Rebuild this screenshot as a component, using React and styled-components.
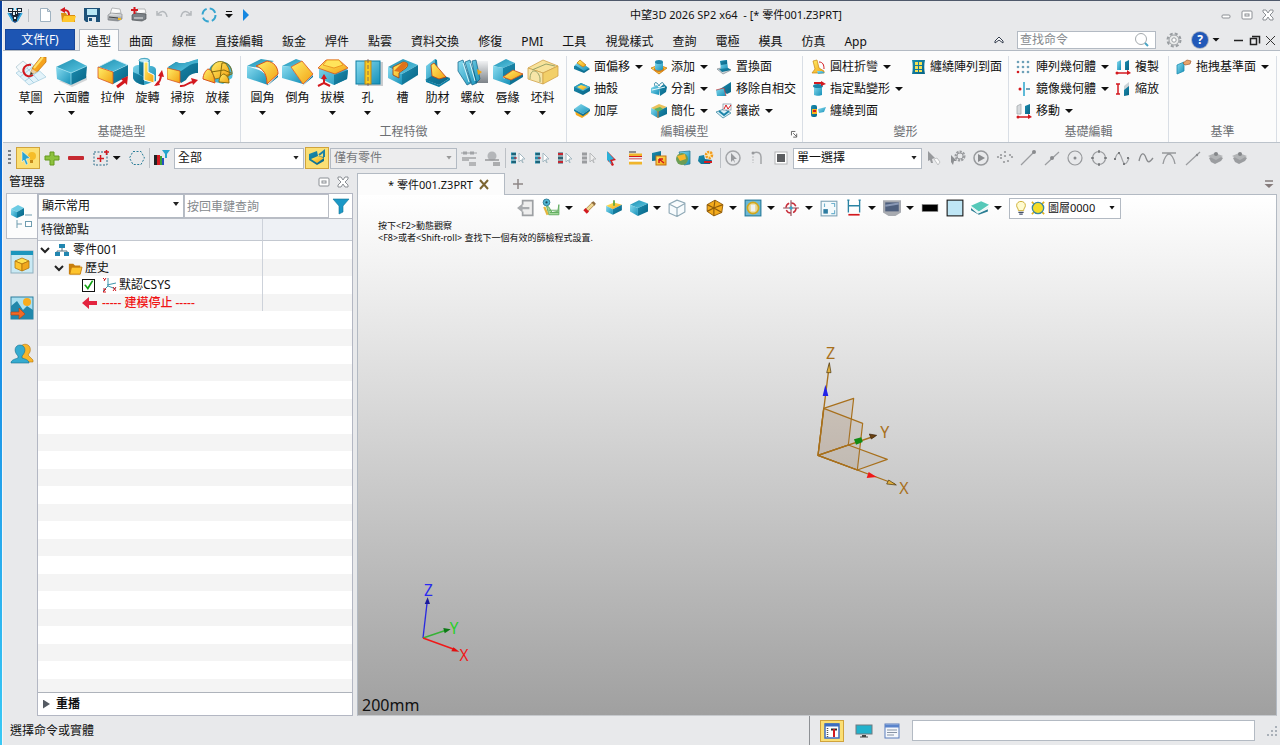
import React from "react";
import styled, { createGlobalStyle, css } from "styled-components";

const GlobalStyle = createGlobalStyle`
  * {
    box-sizing: border-box;
  }

  body {
    margin: 0;
    overflow: hidden;
  }

  body, button, input, select, table {
    font-family: "Noto Sans", "Noto Sans CJK TC", sans-serif;
    font-size: 12px;
    line-height: 16px;
    color: #111;
  }

  button {
    padding: 0;
    border: 0;
    background: none;
    white-space: nowrap;
  }

  svg {
    display: block;
    flex: none;
  }
`;

const T1 = "url(#tealTop)";
const T2 = "url(#tealLeft)";
const T3 = "url(#tealRight)";
const Y = "url(#yellow)";
const G = "url(#grey)";
const RED = "#d3191f";

const HiddenSvg = styled.svg`
  position: absolute;
`;

const Defs = () => (
  <HiddenSvg width="0" height="0" aria-hidden="true">
    <defs>
      <linearGradient id="tealTop" x1="0" y1="0" x2="1" y2="1">
        <stop offset="0" stopColor="#1f8fb0" />
        <stop offset="1" stopColor="#5cc8e4" />
      </linearGradient>
      <linearGradient id="tealLeft" x1="0" y1="0" x2="1" y2="1">
        <stop offset="0" stopColor="#8adcf0" />
        <stop offset="1" stopColor="#1590b8" />
      </linearGradient>
      <linearGradient id="tealRight" x1="0" y1="0" x2="1" y2="1">
        <stop offset="0" stopColor="#1c8db0" />
        <stop offset="1" stopColor="#086485" />
      </linearGradient>
      <linearGradient id="yellow" x1="0" y1="0" x2="1" y2="1">
        <stop offset="0" stopColor="#fff06a" />
        <stop offset="1" stopColor="#f2a012" />
      </linearGradient>
      <linearGradient id="grey" x1="0" y1="0" x2="0" y2="1">
        <stop offset="0" stopColor="#f1f2f3" />
        <stop offset="1" stopColor="#7c8288" />
      </linearGradient>
    </defs>
  </HiddenSvg>
);

const Face = ({ p, f, s }) => (
  <polygon points={p} fill={f} stroke={s} strokeWidth={s ? 0.8 : 0} strokeLinejoin="round" />
);

const MiniBox = ({ top = T1, left = T2, right = T3 }) => (
  <>
    <Face p="0,5 8,1 16,4 7,8" f={top} />
    <Face p="0,5 7,8 7,15 0,11" f={left} />
    <Face p="7,8 16,4 16,11 7,15" f={right} />
  </>
);

/* ribbon drawings, 32 x 32 */
const big = {
  sketch: (
    <>
      <Face p="1,16 16,6 31,20 14,28" f="#e3f3fa" s="#a9cfdf" />
      <path d="M5 20l14-11M10 24l14-10M6 13l13 13M11 10l13 14" stroke="#a9d2e4" fill="none" />
      <Face p="1,10 8,4 14,9 6,16" f="#f3f8fa" s="#b4cad4" />
      <path d="M16 8c-6-1-9 4-7 8c2 4 6 4 9 2" stroke={RED} strokeWidth="2" fill="none" />
      <Face p="15,18 18,10 26,0 31,0 31,5 23,14" f="#f6a31c" s="#c57312" />
      <path d="M19 11l9-11" stroke="#ffe16a" strokeWidth="2" />
      <Face p="15,18 17,12 22,15" f="#e8cfa4" />
      <Face p="15,18 16,15 18,17" f="#333" />
    </>
  ),
  block: (
    <>
      <Face p="3,24 16,30 31,23 31,19" f="#d3d6d8" />
      <Face p="0,10 17,2 31,9 15,16" f={T1} />
      <Face p="0,10 15,16 15,28 1,22" f={T2} />
      <Face p="15,16 31,9 30,21 15,28" f={T3} />
      <path d="M0 10l15 6l16-7M15 16v12" stroke="#9fe2f2" fill="none" strokeWidth=".7" />
    </>
  ),
  extrude: (
    <>
      <Face p="1,10 17,2 31,8 16,15" f={T1} s="#d9f3fa" />
      <Face p="16,15 31,8 31,19 16,27" f={T3} />
      <Face p="1,10 16,15 16,27 1,21" f={Y} s="#d9531e" />
      <path d="M20 30l8-6" stroke={RED} strokeWidth="3" />
      <Face p="31,19 30,28 24,22" f={RED} />
    </>
  ),
  revolve: (
    <>
      <path d="M1 12c0-3 3-4 6-4V3c2-3 9-3 11 0v6c4 0 6 2 6 4v11l-12 4C6 27 1 24 1 20z" fill={T2} />
      <ellipse cx="12" cy="3.500" rx="5" ry="2" fill="#c4edf7" stroke="#2a8cab" strokeWidth=".7" />
      <path d="M7 8v9l5 3V6c-2 0-4-1-5-2z" fill={T3} />
      <path d="M1 15l11 5v8C6 27 1 24 1 20z" fill={T3} />
      <path d="M12 5h4v10l6 3v8l-10-3z" fill={Y} stroke="#fff" />
      <path d="M24 28c3-2 5-5 5-11" stroke={RED} strokeWidth="2" fill="none" />
      <Face p="26,19 30,13 32,20" f={RED} />
      <Face p="22,29 26,24 28,28" f={RED} />
    </>
  ),
  sweep: (
    <>
      <path d="M1 10l8-5c7 3 11 0 22-2v13c-6 0-9 2-12 7l-5 3z" fill={T3} />
      <path d="M1 11l8-6c7 3 11 0 22-3v4c-8 0-10 4-17 8z" fill={T1} />
      <Face p="0,11 13,14 13,26 0,22" f={Y} s="#d9531e" />
      <path d="M13 29c6 1 8-4 13-4" stroke={RED} strokeWidth="2" fill="none" />
      <Face p="24,21 31,23 26,28" f={RED} />
    </>
  ),
  loft: (
    <>
      <path d="M1 22L9 9c6-7 16-6 20 1c2 4 2 8 1 11l-9 6z" fill={T1} />
      <path d="M1 22c0-5 3-9 5-10c4 1 6 6 7 14z" fill={Y} stroke="#d9531e" />
      <path d="M9 12c3-8 10-9 14-6c4 4 5 9 4 13l-14 3z" fill={Y} stroke="#876b0b" strokeWidth=".8" />
      <path d="M20 6c6-1 10 4 10 11l-8 2M9 15l13-2l7 3M20 6l-2 15" fill="none" stroke="#876b0b" />
      <path d="M17 25c0-5 3-8 5-8c4 2 5 5 5 9z" fill={Y} stroke="#876b0b" />
    </>
  ),
  fillet: (
    <>
      <Face p="0,9 14,2 27,4 13,11" f={T1} />
      <path d="M0 9l12 4c7 3 9 8 9 15L0 21z" fill={T2} />
      <path d="M9 9l11-5c7 1 11 6 11 13l-11 10c0-9-3-15-11-18z" fill={Y} stroke="#d9531e" />
      <Face p="20,29 31,18 31,20" f={T3} />
    </>
  ),
  chamfer: (
    <>
      <Face p="0,9 14,2 20,4 9,10" f={T1} />
      <Face p="0,9 9,10 21,27 0,21" f={T2} />
      <Face p="9,10 20,4 31,17 21,27" f={Y} s="#d9531e" />
      <Face p="20,29 31,18 31,20" f={T3} />
    </>
  ),
  draft: (
    <>
      <Face p="2,11 18,6 31,13 30,22 17,28 2,21" f={T2} />
      <Face p="17,18 31,13 30,22 17,28" f={T3} />
      <Face p="1,11 9,3 22,3 31,11 18,17" f={Y} s="#d9531e" />
      <Face p="6,8 10,3 22,3 26,8 17,11" f="#ffe45b" s="#e78a19" />
      <path d="M7 20v6l-6 3M7 26l6 3" stroke={RED} strokeWidth="2" fill="none" />
      <Face p="4,22 7,17 10,22" f={RED} />
    </>
  ),
  hole: (
    <>
      <rect x="6" y="5" width="25" height="24" fill="#c9cccf" />
      <rect x="4" y="4" width="24" height="23" fill={T2} stroke="#0b7da3" />
      <rect x="13" y="4" width="6" height="23" fill="#f8cc22" stroke="#c78a10" />
      <path d="M16 2v27" stroke="#755" strokeDasharray="4 2" strokeWidth=".8" />
    </>
  ),
  slot: (
    <>
      <Face p="1,10 16,2 31,8 15,17" f={T1} />
      <Face p="1,10 15,17 15,28 1,21" f={T2} />
      <Face p="15,17 31,8 31,18 15,28" f={T3} />
      <path d="M6 18v-8l10-5c5 0 6 3 3 6l-7 5v5z" fill={Y} stroke="#a33b0b" strokeWidth=".8" />
      <path d="M7 14l9-9c5 0 5 3 2 6l-5 4z" fill="#e0721b" />
    </>
  ),
  rib: (
    <>
      <Face p="4,9 13,2 14,18 4,23" f={T2} />
      <Face p="13,2 15,3 16,17 28,21 17,28 3,23 13,17" f={T3} />
      <Face p="9,8 12,6 24,20 17,22 10,19" f={Y} s="#c23d12" />
      <Face p="4,23 17,28 28,21 28,23 17,30 4,25" f="#0b7da3" />
    </>
  ),
  thread: (
    <>
      <rect x="17" y="4" width="14" height="22" fill={G} />
      <path d="M1 5l5-2l8 23l-4 2L1 14zM8 5l5-2l7 23l-5 2zM15 4l4-1l4 19l-4 4z" fill={T2} stroke="#0d6084" strokeWidth=".7" />
      <path d="M6 6l6 19M13 6l5 18" stroke="#d9f5fb" />
      <Face p="20,12 25,15 21,18" f="#f0a414" />
    </>
  ),
  lip: (
    <>
      <Face p="1,9 14,2 23,6 11,11" f={T1} />
      <Face p="11,11 23,6 23,14 31,17 31,20 18,28 11,19" f={T3} />
      <Face p="1,9 11,11 11,21 18,23 18,28 1,22" f={T2} />
      <Face p="11,20 21,13 31,17 19,23" f={Y} s="#d9531e" />
    </>
  ),
  stock: (
    <>
      <Face p="1,11 16,3 31,9 16,16" f="#f7e29a" s="#d0a24a" />
      <Face p="1,11 16,16 16,27 1,22" f="#f6e5a8" s="#d0a24a" />
      <Face p="16,16 31,9 31,19 16,27" f="#f2cf68" s="#d0a24a" />
      <path d="M3 22c0-11 8-10 10-1v4M5 13l14-6l9 2" fill="none" stroke="#98a36a" />
    </>
  ),
};

/* toolbar drawings, 16 x 16 */
const small = {
  logo: (
    <>
      <path d="M1 6h14l-4 8l-3 2l-3-2z" fill="#1b4f86" />
      <path d="M1 6l5 8M15 6l-5 8" stroke="#37aee0" strokeWidth="1.500" />
      <path d="M1 1h5v4H1zM10 1h5v4h-5zM5 4h6v5H5zM6 9h4v5H6z" fill="#1b2430" />
      <path d="M2 2h3v2H2zM11 2h3v2h-3zM6 5h2v3H6zM9 5h1v2H9zM7 10h2v2H7z" fill="#e6f3fa" />
      <path d="M6 1h1v2H6zM9 1h1v2H9z" fill="#37aee0" />
    </>
  ),
  newFile: <path d="M3.500 1.500h7l3 3v10h-10zM10.500 1.500v3h3" fill="#fff" stroke="#9fb2c1" />,
  open: (
    <>
      <path d="M1 6h5l1 2h8v7H2z" fill="#d98e12" />
      <path d="M4 9h12l-2 6H2z" fill="#ffc72c" />
      <path d="M9 8c0-5-3-5-5-5" stroke={RED} strokeWidth="2" fill="none" />
      <Face p="0,3 5,0 5,6" f={RED} />
    </>
  ),
  save: (
    <>
      <path d="M0 1h16v14H2l-2-2z" fill="#1e5279" />
      <rect x="3" y="2" width="10" height="6" fill="#b9e7f4" />
      <rect x="4" y="10" width="8" height="5" fill="#dce7ee" />
      <rect x="5" y="11" width="3" height="3" fill="#1e5279" />
    </>
  ),
  print: (
    <>
      <Face p="5,1 13,2 14,6 3,7" f="#fafafa" s="#a5a7a9" />
      <path d="M1 8l3-2l11 1v5l-4 2l-10-1z" fill={G} stroke="#85888b" strokeWidth=".7" />
      <path d="M2 10l9 1" stroke="#444" />
      <path d="M11 12h3" stroke="#f3b81a" strokeWidth="2" />
    </>
  ),
  printPlus: (
    <>
      <Face p="6,2 14,2 15,6 5,7" f="#fafafa" s="#a5a7a9" />
      <path d="M1 8l3-2l11 1v5l-4 2l-10-1z" fill="#7b8187" stroke="#4d5155" strokeWidth=".7" />
      <path d="M3 11h9" stroke="#eee" />
      <path d="M0 3h7M3.500 0v7" stroke={RED} strokeWidth="2" />
    </>
  ),
  undo: <path d="M4 7c4-4 8-3 9 3M3 4v4h5" stroke="#b4b8bc" strokeWidth="1.500" fill="none" />,
  redo: <path d="M12 7C8 3 4 4 3 10M13 4v4H8" stroke="#b4b8bc" strokeWidth="1.500" fill="none" />,
  refresh: <circle cx="8" cy="8" r="6.500" fill="none" stroke="#36a5cf" strokeWidth="2" strokeDasharray="7 3.200" />,
  play: <path d="M5 2l6 6l-6 6z" fill="#1687e0" />,
  offset: (
    <>
      <Face p="0,7 6,4 16,10 10,14 0,10" f={T3} />
      <Face p="1,6 5,2 15,9 10,12" f={T2} />
      <Face p="3,4 6,1 12,6 9,8" f={Y} s="#c98410" />
    </>
  ),
  shell: (
    <>
      <Face p="0,6 7,2 16,6 16,10 9,14 0,10" f={T3} />
      <Face p="0,6 7,2 16,6 9,10" f={T1} />
      <Face p="3,6 7,4 13,6 9,9" f={Y} />
    </>
  ),
  thicken: (
    <>
      <Face p="1,8 8,12 16,7 14,11 8,15 2,12" f="#f2a81d" />
      <Face p="0,6 7,1 16,6 9,11" f={T2} />
      <Face p="0,6 9,11 16,6 16,8 9,13 0,8" f={T3} />
    </>
  ),
  add: (
    <>
      <Face p="0,9 8,6 16,9 8,15" f={Y} s="#c9770d" />
      <ellipse cx="8" cy="10" rx="5" ry="3" fill="#d77a12" />
      <path d="M4 3v7c2 2 6 2 8 0V3z" fill={T2} />
      <ellipse cx="8" cy="3" rx="4" ry="2" fill="#2388ae" />
    </>
  ),
  divide: (
    <>
      <Face p="0,7 6,4 8,7 8,14 0,12" f={T2} />
      <Face p="8,7 13,3 16,6 15,11 9,15" f={T3} />
      <path d="M4 5c-2-4 2-5 4 0c2-5 6-4 4 0" stroke="#3c8ca8" fill="none" />
      <path d="M1 9l13-3" stroke="#e6f8fc" />
    </>
  ),
  simplify: (
    <>
      <MiniBox top="#e9c25b" />
      <Face p="3,6 9,4 12,6 7,9" f="#59b368" />
      <path d="M7 8v7" stroke="#e4761b" />
    </>
  ),
  replace: (
    <>
      <Face p="1,10 9,8 15,11 7,15" f="#cfd5d9" s="#8a969c" />
      <Face p="4,2 11,1 12,10 5,11" f={T2} />
      <Face p="4,2 11,1 11,5 5,6" f={T3} />
      <Face p="3,10 12,9 15,11 6,13" f={T3} />
    </>
  ),
  selfCross: (
    <>
      <Face p="4,8 15,1 15,11 11,13" f={T3} />
      <Face p="0,9 8,7 10,15 1,15" f={T2} />
      <path d="M0 9l8-2l2 8" stroke="#c93131" fill="none" strokeWidth=".7" />
    </>
  ),
  inlay: (
    <>
      <Face p="0,9 8,6 15,10 7,15" f="#d8eff7" s="#438ba5" />
      <path d="M3 8l5 4l5-4" stroke="#1b83a8" strokeWidth="2" fill="none" />
      <rect x="7" y="1" width="8" height="6" fill="#fff" stroke="#789" strokeWidth=".7" />
      <path d="M8 6l2-4l2 4l3-4" stroke={RED} fill="none" />
    </>
  ),
  bend: (
    <>
      <path d="M3 2l4-1l2 8l5 3v2H2l3-4z" fill={Y} stroke="#c98410" strokeWidth=".7" />
      <path d="M9 3c4 0 5 3 5 7" stroke={RED} fill="none" />
      <Face p="7,12 12,12 15,14 8,15" f={T2} />
    </>
  ),
  pointDeform: (
    <>
      <path d="M4 4v10c2 1 6 1 8 0V4z" fill={T2} />
      <ellipse cx="8" cy="5" rx="5" ry="2" fill="#1c83a8" />
      <path d="M4 2h9" stroke={RED} strokeWidth="2" />
      <Face p="11,0 16,3 11,5" f={RED} />
    </>
  ),
  wrapFace: (
    <>
      <rect x="1" y="2" width="6" height="12" rx="2" fill={T3} />
      <rect x="2" y="6" width="5" height="5" fill="#f3b41c" />
      <path d="M3 8h3" stroke={RED} strokeWidth="2" />
      <Face p="8,6 16,4 14,9 9,10" f={T2} />
    </>
  ),
  wrapArray: (
    <>
      <path d="M2 1h13c-1 4-1 10 0 14H2c1-4 1-10 0-14z" fill={T3} />
      <path d="M5 3h3v3H5zM9 3h3v3H9zM5 7h3v3H5zM9 7h3v3H9zM5 11h3v2H5zM9 11h3v2H9z" fill="#f5e154" />
    </>
  ),
  pattern: (
    <>
      {[2, 7, 12].map((y) => [2, 7, 12].map((x) => (
        <circle key={`${x}-${y}`} cx={x} cy={y + 1} r="1.300" fill={x === 2 && y === 12 ? RED : "#6ea1b8"} />
      )))}
    </>
  ),
  mirror: (
    <>
      <path d="M8 1v14" stroke="#2aa5cd" strokeWidth="1.500" />
      <circle cx="4" cy="8" r="1.500" fill={RED} />
      <path d="M10 8h4" stroke="#6ea1b8" strokeWidth="2" />
    </>
  ),
  move: (
    <>
      <Face p="1,3 5,1 5,11 1,11" f="#d7dadd" s="#a6abaf" />
      <Face p="9,3 14,1 14,11 9,11" f={T3} />
      <path d="M1 14h13" stroke={RED} strokeWidth="1.500" />
      <circle cx="2" cy="14" r="1.500" fill={RED} />
      <Face p="12,11 16,14 12,16" f={RED} />
    </>
  ),
  copy: (
    <>
      <Face p="2,3 6,1 6,11 2,11" f={T2} />
      <Face p="10,3 14,1 14,11 10,11" f={T3} />
      <path d="M2 14h11" stroke={RED} strokeWidth="1.500" />
      <circle cx="2" cy="14" r="1.500" fill={RED} />
      <Face p="12,11 16,14 12,16" f={RED} />
    </>
  ),
  scale: (
    <>
      <path d="M3 3v10M1 3h4M1 13h4" stroke={RED} strokeWidth="1.500" />
      <Face p="9,5 14,1 14,14 9,15" f="#ccd3d6" />
      <Face p="9,9 14,5 14,14 9,15" f={T3} />
    </>
  ),
  datum: (
    <>
      <Face p="1,6 8,3 8,12 1,15" f={T2} s="#1a8eb2" />
      <path d="M7 4l4-3l4 1l-1 3l-5 1z" fill="#e8a46c" stroke="#a35d32" strokeWidth=".7" />
    </>
  ),
  pick: (
    <>
      <circle cx="12" cy="6" r="4" fill="#f6bd2a" />
      <path d="M10 10h3v3h-3z" fill="#c58a1a" />
      <path d="M2 1l8 7l-4 1l2 5l-2 1l-2-5l-2 2z" fill="#2aa4cf" stroke="#fff" strokeWidth=".5" />
    </>
  ),
  plus: <path d="M6 2h4v4h5v4h-5v5H6v-5H1V6h5z" fill="#8dc23e" stroke="#649a1d" />,
  minus: <rect x="0" y="6" width="16" height="4" rx="1" fill="#c62a31" />,
  marquee: (
    <>
      <rect x="1" y="2" width="13" height="13" fill="none" stroke="#2a6d88" strokeDasharray="2 1.500" />
      <path d="M4 8.500h7M7.500 5v7M11 2h5M13.500 0v5" stroke={RED} strokeWidth="1.500" />
    </>
  ),
  lasso: <path d="M4 1.500h8l3.500 6.500l-3.500 6.500h-8l-3.500-6.500z" fill="none" stroke="#2a7d98" strokeDasharray="2 1.500" />,
  colorFilter: (
    <>
      <path d="M0 5h3v10H0z" fill="#222" />
      <path d="M3 5h3v10H3z" fill="#d3191f" />
      <path d="M6 6h2v9H6z" fill="#38a038" />
      <path d="M8 8h2v7H8z" fill="#274ec0" />
      <path d="M8 0h8l-3 4v4h-2V4z" fill="#23a5cc" />
    </>
  ),
  partPick: (
    <>
      <Face p="0,4 8,1 9,6 15,7 15,11 8,15 0,10" f={T3} />
      <Face p="2,9 9,6 15,8 8,13" f={Y} />
      <path d="M10 5l5-4v6" stroke="#1b82a6" strokeWidth="2" fill="none" />
    </>
  ),
  link: (
    <>
      <path d="M0 3h16" stroke="#a2a4a7" />
      <path d="M2 3h4M9 3h4" stroke="#a2a4a7" strokeWidth="3" />
      <path d="M1 8h14M1 10h7M8 13h7M8 15h7" stroke="#a2a4a7" strokeWidth="1.500" />
    </>
  ),
  globeList: (
    <>
      <circle cx="7" cy="6" r="4.500" fill="#b4b6b9" />
      <path d="M0 10h14M8 13h7M8 15h7" stroke="#96989b" strokeWidth="1.500" />
    </>
  ),
  listTeal: (
    <>
      <path d="M1 4h5M1 8h5M1 12h5" stroke="#238aa8" strokeWidth="3" />
      <path d="M2 4h4M2 12h4" stroke="#1c3b46" />
      <path d="M4 8h3" stroke={RED} />
      <path d="M9 3l6 6h-3l1 4l-2-3l-2 2z" fill="#fff" stroke="#a5b9c2" />
    </>
  ),
  listRed: (
    <>
      <path d="M1 4h5M1 8h5M1 12h5" stroke="#2f6272" strokeWidth="3" />
      <path d="M1 4h5M1 12h5" stroke="#c32732" strokeWidth="2" />
      <path d="M9 3l6 6h-3l1 4l-2-3l-2 2z" fill="#fff" stroke="#a5b9c2" />
    </>
  ),
  listGrey: (
    <>
      <path d="M1 4h5M1 8h5M1 12h5" stroke="#9a9c9f" strokeWidth="3" />
      <path d="M9 3l6 6h-3l1 4l-2-3l-2 2z" fill="#eee" stroke="#b7b9bb" />
    </>
  ),
  cursor: (
    <>
      <path d="M4 2l8 8l-4 1l2 4l-2 1l-3-5l-1 1z" fill={RED} />
      <path d="M3 1l7 8l-4 1l2 4l-2-1l-2-3l-1 1z" fill="#2ab1d9" />
    </>
  ),
  layers: (
    <>
      <path d="M1 2h7" stroke="#333" />
      <path d="M1 5h13M1 13h13" stroke="#f0b52b" strokeWidth="3" />
      <path d="M1 6.500h13M1 9h13" stroke={RED} />
      <path d="M1 10.500h14" stroke="#fff" strokeWidth="2" />
    </>
  ),
  copyBox: (
    <>
      <path d="M1 3l9-2v9l-9 1z" fill={T3} />
      <rect x="5" y="6" width="10" height="9" fill={Y} stroke="#c57310" />
      <path d="M8 9l5 4M8 9h4M8 9v4" stroke={RED} strokeWidth="1.500" />
    </>
  ),
  ball: (
    <>
      <Face p="4,2 15,1 15,14 9,15" f={T2} s="#2b7e9b" />
      <circle cx="7" cy="9" r="6" fill="#6b9d55" />
      <path d="M2 6l8-2l1 5l-6 2z" fill="#f7b62b" />
    </>
  ),
  gearBox: (
    <>
      <Face p="1,6 6,5 7,9 14,10 12,14 3,14 0,11" f={T3} />
      <circle cx="11" cy="5" r="3" fill="#ffe9a8" stroke="#f29a1a" strokeWidth="2.500" strokeDasharray="2 1" />
      <path d="M6 12h8" stroke={RED} strokeWidth="2" />
    </>
  ),
  circleCursor: (
    <>
      <circle cx="8" cy="8" r="7" fill="none" stroke="#a3a5a8" strokeWidth="1.500" />
      <path d="M6 3l6 6H9l1 4l-2-3l-2 2z" fill="#97999c" />
    </>
  ),
  loop: (
    <>
      <path d="M4 3c5-2 8 0 8 4v7" stroke="#a3a5a8" strokeWidth="1.500" fill="none" />
      <path d="M4 6v7" stroke="#b9bbbd" strokeDasharray="2 1" />
      <circle cx="4" cy="3" r="1.500" fill="#97999c" />
    </>
  ),
  square: (
    <>
      <rect x="2" y="2" width="12" height="12" fill="#fff" stroke="#b2b4b6" />
      <rect x="4" y="4" width="8" height="8" fill="#5b5d60" />
    </>
  ),
  cursorGrey: (
    <>
      <path d="M2 1l7 7l-3 1l1 4l-2 0l-1-3l-2 1z" fill="#97999c" />
      <path d="M8 9l3-1l3 4l-2 3z" fill="#fafafa" stroke="#c1c3c5" />
    </>
  ),
  gearGrey: (
    <>
      <circle cx="10" cy="6" r="4" fill="none" stroke="#9b9da0" strokeWidth="3" strokeDasharray="2 1" />
      <circle cx="10" cy="6" r="3" fill="#e8e9eb" stroke="#9b9da0" />
      <path d="M1 5l6 6H4l-1 4l-2-3z" fill="#8d8f92" />
    </>
  ),
  circlePlay: (
    <>
      <circle cx="8" cy="8" r="7" fill="none" stroke="#97999c" strokeWidth="1.500" />
      <path d="M5 4l7 4l-7 4z" fill="#898b8e" />
    </>
  ),
  dots: (
    <>
      {[[1, 7], [4, 5], [4, 8], [8, 6], [8, 2], [13, 5], [15, 7], [7, 12], [11, 11]].map(([x, y]) => (
        <circle key={`${x}-${y}`} cx={x} cy={y} r="1.100" fill="#97999c" />
      ))}
    </>
  ),
  lineEnd: (
    <>
      <path d="M1 15L14 2" stroke="#9b9da0" strokeWidth="1.200" />
      <circle cx="14" cy="2" r="2" fill="#898b8e" />
    </>
  ),
  lineMid: (
    <>
      <path d="M1 15L15 2" stroke="#9b9da0" strokeWidth="1.200" />
      <circle cx="8" cy="8" r="2" fill="#898b8e" />
    </>
  ),
  circleDot: (
    <>
      <circle cx="8" cy="8" r="7" fill="none" stroke="#97999c" strokeWidth="1.200" />
      <circle cx="8" cy="8" r="1.500" fill="#898b8e" />
    </>
  ),
  circleQuad: (
    <>
      <circle cx="8" cy="8" r="6.500" fill="none" stroke="#97999c" strokeWidth="1.200" />
      <path d="M7 1.500h2M7 14.500h2M1.500 7v2M14.500 7v2" stroke="#77797c" strokeWidth="2.500" />
    </>
  ),
  spline: (
    <>
      <path d="M1 9c3-9 5-6 7 0s4 7 7-1" stroke="#a3a5a8" strokeWidth="1.200" fill="none" />
      <path d="M1 8v2M5 2v2M10 13v2M14 7v2" stroke="#77797c" strokeWidth="2" />
    </>
  ),
  wave: <path d="M1 11c2-9 5-9 7-3s4 4 7 0" stroke="#898b8e" strokeWidth="1.300" fill="none" />,
  tangent: <path d="M1 3h14M2 14c1-6 4-10 6-10s5 4 6 10" stroke="#97999c" strokeWidth="1.300" fill="none" />,
  line: (
    <>
      <path d="M1 15L15 2" stroke="#9b9da0" strokeWidth="1.200" />
      <circle cx="12" cy="5" r="1.200" fill="#898b8e" />
    </>
  ),
  surface: (
    <>
      <Face p="1,8 8,4 15,8 13,11 7,14 3,12" f="#9b9da0" />
      <Face p="0,6 7,3 15,6 8,10" f="#b2b4b6" />
      <circle cx="8" cy="4" r="2" fill="#848689" />
    </>
  ),
  exit: (
    <>
      <path d="M5 5V1.500h9v13H5V11" fill="#eee" stroke="#9da0a3" strokeWidth="1.500" />
      <path d="M0 8l5-4v3h6v2H5v3z" fill="#a8abae" />
    </>
  ),
  camera: (
    <>
      <path d="M4 6l2 8h9V5l-1 6l-5 1l-3-5z" fill="#a5d89c" stroke="#5eaa5c" strokeWidth=".8" />
      <path d="M6 10h8M7 12h8" stroke="#5eaa5c" strokeWidth=".8" />
      <path d="M2 7l3 7" stroke="#e4b53c" strokeWidth="2" />
      <circle cx="4" cy="3" r="3" fill="#52b7d5" stroke="#2d7c95" strokeWidth=".8" />
      <circle cx="4" cy="3" r="1" fill="#184c5e" />
    </>
  ),
  eraser: (
    <>
      <Face p="4,10 11,3 13,5 6,12" f="#efd793" s="#b0823e" />
      <Face p="3,10 5,8 8,11 6,13" f={RED} />
      <Face p="10,3 12,2 14,4 13,6" f="#8d6b3e" />
    </>
  ),
  boxYellow: (
    <>
      <Face p="1,6 8,3 15,5 7,9" f={Y} />
      <Face p="1,6 7,9 7,14 1,11" f={T2} />
      <Face p="7,9 15,5 15,10 7,14" f={T3} />
      <path d="M8 1v5" stroke="#58a33c" strokeWidth="1.500" />
    </>
  ),
  boxTeal: <MiniBox />,
  boxWire: (
    <path d="M1 4.500l7-3.500l7 2.500v8l-7 4l-7-3zM1 4.500l7 3.500l7-4M8 8v7.500" fill="#f7fbfd" stroke="#8fa9b6" strokeLinejoin="round" />
  ),
  mesh: (
    <>
      <Face p="1,5 8,1 15,5 14,12 7,15 1,11" f="#f4ab1b" s="#8e5a0a" />
      <path d="M1 5l6 3l8-3M7 8v7M1 11l6-3l7 4M8 1L7 8" stroke="#8e5a0a" fill="none" />
    </>
  ),
  zoomBox: (
    <>
      <rect x="1" y="1" width="14" height="14" fill="#6cb9d6" stroke="#25799a" />
      <circle cx="8" cy="8" r="5" fill="#e8d58d" stroke="#d0a71e" strokeWidth="1.500" />
      <rect x="6" y="5" width="4" height="6" fill="#eff2f2" />
    </>
  ),
  target: (
    <>
      <circle cx="8" cy="8" r="4.500" fill="none" stroke="#c92f3c" strokeWidth="1.300" strokeDasharray="5 2" />
      <path d="M8 1v14M1 8h14" stroke="#8f4553" />
      <circle cx="8" cy="8" r="1.500" fill="#3aa5c7" />
    </>
  ),
  fit: (
    <>
      <rect x="1" y="2" width="14" height="13" fill="#f4fafc" stroke="#7fa3b6" />
      <rect x="3" y="9" width="4" height="4" fill="#2e7ca1" />
      <path d="M10 4h3v3M13 10v3h-3M4 4v3" stroke="#6fb2cf" fill="none" />
    </>
  ),
  measure: (
    <>
      <path d="M3 1v11M13 1v11M3 6h10M2 1h2M12 1h2" stroke="#2a83a3" strokeWidth="1.200" />
      <path d="M3 14h10" stroke={RED} strokeWidth="1.500" />
    </>
  ),
  monitor: (
    <>
      <path d="M0 1h16v11l-5 3H5l-5-3z" fill="#a8abb1" />
      <rect x="2" y="3" width="12" height="8" fill="#4e5f7d" />
      <path d="M2 6l12-2" stroke="#8998b5" strokeWidth="2" />
    </>
  ),
  black: <rect x="1" y="5" width="14" height="6" fill="#000" stroke="#777" strokeWidth=".5" />,
  paleBlue: <rect x="1" y="1" width="14" height="14" fill="#bfe6f5" stroke="#1b1b1b" />,
  sheets: (
    <>
      <Face p="0,8 6,13 15,9 15,11 7,14 0,10" f="#2a7d93" />
      <Face p="0,6 9,2 16,5 7,11" f="#56c9b9" />
      <path d="M0 7l7 5l9-5" stroke="#e4f6f6" fill="none" />
    </>
  ),
  bulb: (
    <>
      <path d="M5 11c0-3-2-3-2-6c0-6 10-6 10 0c0 3-2 3-2 6z" fill="#fffbd0" stroke="#c8a721" />
      <path d="M5 13h6M6 15h4" stroke="#44506a" strokeWidth="1.500" />
    </>
  ),
  layerOn: (
    <>
      <path d="M1 1l3 3M15 1l-3 3M1 15l3-3M15 15l-3-3" stroke="#e2b21b" strokeWidth="2" />
      <circle cx="8" cy="8" r="6.500" fill="#f4dd27" stroke="#3a86a0" strokeWidth="1.500" />
    </>
  ),
  assembly: (
    <>
      <path d="M8 5v4M3 12V9h10v3" stroke="#58707f" fill="none" />
      <path d="M5 2h6v4H5zM1 10h5v4H1zM10 10h5v4h-5z" fill="#2186b0" />
    </>
  ),
  folder: (
    <>
      <path d="M1 3h5l2 2h6v10H1z" fill="#c77e0d" />
      <path d="M4 7h12l-2 8H2z" fill="#fdc42e" stroke="#c77e0d" />
    </>
  ),
  csys: (
    <>
      <path d="M7 9V1M7 9l8 3M7 9l-5 5M6 8l9-2" stroke="#3f96ad" fill="none" />
      <path d="M2 1l2 2M5 1L3 4M12 10l3 4M15 10l-3 4M2 12h3l-3 3h3" stroke={RED} fill="none" />
    </>
  ),
  back: <path d="M0 8l7-6v4h8v4H7v4z" fill="#e3243f" />,
  funnel: <path d="M0 1h16l-6 7v6l-4 2V8z" fill="#1b98c6" stroke="#127699" strokeWidth=".6" />,
  gear: (
    <>
      <circle cx="8" cy="8" r="6.500" fill="none" stroke="#999da1" strokeWidth="2" strokeDasharray="3 2.100" />
      <circle cx="8" cy="8" r="5" fill="#eceded" stroke="#999da1" />
      <circle cx="8" cy="8" r="2.200" fill="#fff" stroke="#999da1" />
    </>
  ),
  minimise: <rect x="4" y="8" width="8" height="3" rx="1" fill="#fff" stroke="#8b8f94" />,
  restore: (
    <>
      <rect x="3" y="4" width="10" height="8" rx="1" fill="#fff" stroke="#8b8f94" />
      <rect x="6" y="7" width="4" height="2" fill="none" stroke="#8b8f94" />
    </>
  ),
  close: <path d="M3 3h3l2 3l2-3h3v2l-3 3l3 3v2h-3l-2-3l-2 3H3v-2l3-3l-3-3z" fill="#fff" stroke="#8b8f94" />,
  docMin: <path d="M4 8.500h9" stroke="#222" strokeWidth="1.500" />,
  docRestore: <path d="M6 4.500h7.500v7M4.500 6.500h6v6h-6z" stroke="#222" fill="none" strokeWidth="1.500" />,
  docClose: <path d="M4 4l9 9M13 4l-9 9" stroke="#333" fill="none" />,
  chevUp: <path d="M4 9l4-4l4 4v2l-4-3l-4 3z" fill="#fff" stroke="#333c4d" />,
  lens: (
    <>
      <circle cx="7" cy="7" r="5.500" fill="#fff" stroke="#a3a9ad" />
      <path d="M11 11l3 3" stroke="#4aa5c5" strokeWidth="2" />
    </>
  ),
  customise: (
    <>
      <path d="M4 5h8" stroke="#857b7b" strokeWidth="1.500" />
      <path d="M3.500 8h9L8 12z" fill="#857b7b" />
    </>
  ),
  launch: <path d="M1 10V1h9M5 5l8 8M13 6v8H5" stroke="#555" fill="none" strokeWidth="2" />,
  panelTool: (
    <>
      <rect x="1" y="1" width="14" height="14" fill="#fff" stroke="#3c6dc1" strokeWidth="1.500" />
      <path d="M1 2h14" stroke="#3c6dc1" strokeWidth="3" />
      <path d="M3.500 5v9" stroke="#555" strokeDasharray="1 1" strokeWidth="1.500" />
      <path d="M7 6.500h6" stroke="#2c2c2c" strokeWidth="2" />
      <path d="M10 6v8" stroke={RED} strokeWidth="2" />
    </>
  ),
  screen: (
    <>
      <rect x="0" y="2" width="16" height="9" fill="#22b2cc" stroke="#707b80" />
      <path d="M6 12h4v2H6z" fill="#444" />
      <path d="M4 14h8" stroke="#444" />
    </>
  ),
  notes: (
    <>
      <rect x="1" y="1" width="14" height="14" fill="#f5f8fc" stroke="#5a7fbd" />
      <path d="M1 3h14" stroke="#5a84cc" strokeWidth="3" />
      <path d="M3 7h10M3 9.500h10M3 12h7" stroke="#8693a5" />
    </>
  ),
};

/* side bar drawings, 24 x 24 */
const side = {
  tree: (
    <>
      <Face p="1,5 8,1 14,4 7,8" f="#6ccbe4" />
      <Face p="1,5 7,8 7,14 1,11" f={T2} />
      <Face p="7,8 14,4 14,11 7,14" f={T3} />
      <path d="M15 11h7M7 16v8M7 20h5" stroke="#6f9caf" fill="none" />
      <rect x="15.500" y="17.500" width="6" height="5" fill="#fff" stroke="#6f9caf" />
    </>
  ),
  part: (
    <>
      <rect x="1" y="1" width="22" height="22" fill="#c9e9f4" stroke="#8fb0bf" />
      <rect x="1" y="1" width="22" height="4" fill="#1c96bd" />
      <Face p="5,11 12,8 19,11 12,14" f="#ffe24f" s="#b3760d" />
      <Face p="5,11 12,14 12,21 5,18" f="#fdc52f" s="#b3760d" />
      <Face p="12,14 19,11 19,18 12,21" f="#f1a71d" s="#b3760d" />
    </>
  ),
  scene: (
    <>
      <rect x="1" y="1" width="22" height="22" fill="#a9dff0" stroke="#2c7e9d" />
      <path d="M1 10l6-5l6 9l4-4l6 4v9H1z" fill="#2187ab" />
      <circle cx="17" cy="6" r="4" fill="#f7ac1f" />
      <path d="M1 16h8v-4l6 6l-6 5v-4H1z" fill="#f06a26" stroke="#b9420d" strokeWidth=".6" />
    </>
  ),
  users: (
    <>
      <path d="M11 4c4-4 11-1 9 6l-2 3l5 5v2H12z" fill="#f9b62a" stroke="#b3760d" strokeWidth=".6" />
      <path d="M1 21c0-3 4-4 7-5v-2c-5-5-3-11 2-11s7 6 2 11v2c3 1 7 2 7 5z" fill="#35abd0" stroke="#14708e" strokeWidth=".6" />
    </>
  ),
};

const Icon = ({ name, size = 16 }) => (
  <svg width={size} height={size} viewBox="0 0 16 16" aria-hidden="true" overflow="visible">
    {small[name]}
  </svg>
);

const Caret = styled.span`
  flex: none;
  width: 8px;
  height: 4px;
  background-color: ${(p) => p.$color || "#111"};
  clip-path: polygon(0 0, 100% 0, 50% 100%);
`;

const IconButton = styled.button`
  display: flex;
  align-items: center;
  gap: 4px;
  flex: none;
`;

const Tool = ({ name, label, size, caret, as: Type = IconButton }) => (
  <Type type="button" aria-label={label || name}>
    <Icon name={name} size={size} />
    {caret && <Caret />}
  </Type>
);

const Desktop = styled.div`
  height: 100vh;
  padding-left: 2px;
  border-top: 1px solid #4f596b;
  background: linear-gradient(#0a3f9c, #0d7be0 30%, #39c9f5);
`;

const Window = styled.div`
  height: 100%;
  display: flex;
  flex-direction: column;
  background-color: #e8e9eb;
  border-left: 1px solid #f6f7f8;
`;

const TitleBar = styled.header`
  height: 28px;
  flex: none;
  display: flex;
  align-items: center;
  padding: 0 4px;
  gap: 5px;

  h1 {
    flex: 1;
    margin: 0;
    text-align: center;
    font-size: 11px;
    font-weight: 400;
    white-space: pre;
  }
`;

const Separator = styled.span`
  flex: none;
  width: 1px;
  height: ${(p) => p.$h || 20}px;
  margin-left: ${(p) => p.$gap || 0}px;
  background-color: #bcc0c5;
`;

const WindowButtons = styled.div`
  display: flex;
  gap: ${(p) => p.$gap || 0}px;
`;

const TabRow = styled.nav`
  height: 22px;
  flex: none;
  display: flex;
  align-items: flex-end;
  padding: 0 2px;
  border-bottom: 1px solid #b3bac3;
`;

const FileButton = styled.button`
  width: 70px;
  height: 21px;
  margin-right: 4px;
  background-color: #1d55b3;
  border: 1px solid #17469a;
  color: #fff;
`;

const TabButton = styled.button`
  height: 20px;
  padding: 3px 9px 0 10px;

  ${(p) =>
    p.$active &&
    css`
      height: 22px;
      margin: 0 0 -1px 0;
      padding: 2px 7px 0;
      border: 1px solid #b3bac3;
      border-bottom: 0;
      background-color: #fcfcfc;
    `}
`;

const TabTools = styled.div`
  margin-left: auto;
  height: 21px;
  display: flex;
  align-items: center;
  gap: 10px;
`;

const SearchBox = styled.label`
  width: 139px;
  height: 18px;
  display: flex;
  align-items: center;
  padding-right: 5px;
  background-color: #fff;
  border: 1px solid #b3bac3;
`;

const BareInput = styled.input`
  flex: 1;
  min-width: 0;
  height: 100%;
  padding: 0 2px;
  border: 0;
  outline: 0;
  background: none;

  &::placeholder {
    color: #85898d;
  }
`;

const HelpBadge = styled.span`
  width: 16px;
  height: 16px;
  border-radius: 50%;
  background-color: #2158b8;
  box-shadow: 0 0 0 1px #aeb6c3;
  color: #fff;
  font-weight: 700;
  text-align: center;
`;

const Ribbon = styled.section`
  height: 92px;
  flex: none;
  display: flex;
  padding-top: 5px;
  background-color: #fcfcfc;
  border-bottom: 1px solid #bcc3cb;
`;

const Group = styled.div`
  position: relative;
  flex: none;
  width: ${(p) => p.$w}px;
  display: flex;
  flex-direction: column;
  justify-content: space-between;
  border-right: 1px solid #d9dee5;

  h2 {
    margin: 0 0 2px;
    text-align: center;
    font-size: 12px;
    font-weight: 400;
    color: #6c6f73;
  }
`;

const LaunchCorner = styled.button`
  position: absolute;
  right: 4px;
  bottom: 4px;
`;

const BigRow = styled.div`
  display: flex;
  padding: 1px 0 0 ${(p) => p.$pad}px;
`;

const BigButton = styled.button`
  width: ${(p) => (p.$wide ? 47 : 35)}px;
  height: 60px;
  display: flex;
  flex-direction: column;
  align-items: center;
  gap: 1px;

  ${Caret} {
    width: 7px;
    margin-top: 4px;
  }
`;

const SmallGrid = styled.div`
  display: grid;
  grid-auto-flow: column;
  grid-template-rows: repeat(3, 22px);
  grid-template-columns: ${(p) => p.$cols};
  padding-left: 7px;
`;

const SmallButton = styled.button`
  display: flex;
  align-items: center;
  gap: 4px;

  ${Caret} {
    margin-left: 1px;
  }
`;

const ToolRow = styled.div`
  height: 30px;
  flex: none;
  display: flex;
  align-items: center;
  gap: 1px;
  padding-left: 5px;
`;

const Grip = styled.span`
  width: 3px;
  height: 16px;
  margin-right: 4px;
  background: repeating-linear-gradient(#7c8187 0 2px, transparent 2px 4px);
`;

const ToggleButton = styled.button`
  flex: none;
  width: 24px;
  height: 22px;
  display: flex;
  align-items: center;
  justify-content: center;
  background-color: #fbdf74;
  border: 1px solid #d0a33c;
`;

const Cluster = styled.div`
  flex: none;
  width: ${(p) => p.$w}px;
  margin: 0 3px;
  display: flex;
  justify-content: space-between;
`;

const Picker = styled.span`
  position: relative;
  flex: none;
  width: ${(p) => p.$w}px;
  height: ${(p) => p.$h || 21}px;

  select {
    width: 100%;
    height: 100%;
    padding: 0 4px 0 3px;
    appearance: none;
    border: 1px solid #b3bac3;
    border-radius: 0;
    background-color: #fff;
    opacity: 1;
  }

  select:disabled {
    background-color: #ededee;
    color: #77797c;
  }

  ${Caret} {
    position: absolute;
    right: 5px;
    top: 8px;
    width: 6px;
    height: 4px;
    pointer-events: none;
  }
`;

const Dropdown = ({ w, h, label, value, disabled }) => (
  <Picker $w={w} $h={h}>
    <select aria-label={label} disabled={disabled}>
      <option>{value}</option>
    </select>
    <Caret $color={disabled ? "#999" : "#222"} />
  </Picker>
);

const Main = styled.main`
  flex: 1;
  min-height: 0;
  display: flex;
`;

const Manager = styled.aside`
  width: 350px;
  flex: none;
  display: flex;
  flex-direction: column;
  margin-right: 4px;

  header {
    height: 20px;
    display: flex;
    align-items: center;
    gap: 3px;
    padding: 0 2px 2px 6px;
  }

  h2 {
    flex: 1;
    margin: 0;
    font-size: 12px;
    font-weight: 400;
  }
`;

const ManagerBody = styled.div`
  flex: 1;
  min-height: 0;
  display: flex;
  padding-left: 3px;
`;

const SideTabs = styled.div`
  flex: none;
  width: 31px;
  display: flex;
  flex-direction: column;
`;

const SideTab = styled.button`
  height: 46px;
  display: flex;
  align-items: center;
  justify-content: center;

  ${(p) =>
    p.$active &&
    css`
      background-color: #fcfcfc;
      border: 1px solid #b9bdc5;
      border-right: 0;
    `}
`;

const TreePanel = styled.div`
  flex: 1;
  min-width: 0;
  display: flex;
  flex-direction: column;
  border: 1px solid #b3b7c3;
  background-color: #fff;
`;

const FilterRow = styled.div`
  height: 25px;
  flex: none;
  display: flex;
  border-bottom: 1px solid #b9bdc5;

  label {
    flex: 1;
    min-width: 0;
    display: flex;
    border: 1px solid #b9bdc5;
  }
`;

const FilterButton = styled.button`
  flex: none;
  width: 23px;
  display: flex;
  align-items: center;
  justify-content: center;
`;

const TreeArea = styled.div`
  flex: 1;
  min-height: 0;
  background: repeating-linear-gradient(#fff 0 18px, #f4f4f4 18px 35px) 0 22px;
`;

const TreeTable = styled.table`
  width: 100%;
  table-layout: fixed;
  border-collapse: separate;
  border-spacing: 0;

  th {
    height: 22px;
    padding: 0 3px;
    text-align: left;
    font-weight: 400;
    background-color: #eef1f5;
    border-bottom: 1px solid #c3c8d0;
  }

  th:first-child,
  td:first-child {
    width: 225px;
    border-right: 1px solid #cdd2da;
  }

  td {
    height: 17px;
    padding: 0;
  }

  tbody tr:nth-child(odd) td {
    height: 18px;
  }
`;

const Node = styled.div`
  height: 17px;
  display: flex;
  align-items: center;
  gap: ${(p) => p.$gap || 2}px;
  padding-left: ${(p) => p.$indent}px;
  color: ${(p) => p.$color || "inherit"};
  font-weight: ${(p) => (p.$color ? 500 : 400)};
`;

const CheckBox = styled.input`
  appearance: none;
  width: 13px;
  height: 13px;
  margin: 0 4px 0 0;
  border: 1px solid #111;
  background-color: #fff;

  &:checked::after {
    content: "";
    display: block;
    width: 11px;
    height: 11px;
    background-color: #12a012;
    clip-path: polygon(10% 50%, 25% 45%, 42% 68%, 80% 8%, 95% 12%, 45% 95%);
  }
`;

const Replay = styled.button`
  height: 23px;
  flex: none;
  display: flex;
  align-items: center;
  gap: 6px;
  padding-left: 5px;
  border-top: 1px solid #aeb3bb;
  font-weight: 700;

  &::before {
    content: "";
    width: 7px;
    height: 9px;
    background-color: #555b63;
    clip-path: polygon(0 0, 100% 50%, 0 100%);
  }
`;

const Chevron = () => (
  <svg width="12" height="10" viewBox="0 0 12 10">
    <path d="M2 3l4 4l4-4" fill="none" stroke="#222" strokeWidth="2" />
  </svg>
);

const Document = styled.section`
  flex: 1;
  min-width: 0;
  display: flex;
  flex-direction: column;
  padding-right: 3px;
`;

const DocTabs = styled.div`
  height: 22px;
  flex: none;
  display: flex;
  align-items: center;
  gap: 9px;
  padding-right: 0;
  border-bottom: 1px solid #b3bac3;
  border-left: 1px solid #b3bac3;
`;

const DocTab = styled.div`
  width: 147px;
  height: 22px;
  margin: 0 -1px -1px 0;
  display: flex;
  align-items: center;
  justify-content: flex-end;
  gap: 6px;
  padding-right: 14px;
  background-color: #fcfcfc;
  border: 1px solid #b3bac3;
  border-bottom: 0;
  border-left: 0;
  font-size: 11px;
  white-space: nowrap;
`;

const Spacer = styled.span`
  flex: 1;
`;

const Viewport = styled.div`
  position: relative;
  flex: 1;
  display: flex;
  flex-direction: column;
  border-left: 1px solid #b3bac3;
  border-right: 1px solid #b3bac3;
  border-bottom: 1px solid #c6c9cd;
  background: linear-gradient(#fff, #a0a0a0);
`;

const ViewTools = styled.div`
  height: 25px;
  display: flex;
  align-items: center;
  justify-content: center;
  gap: 7px;
  padding: 1px 0 0 4px;

  ${IconButton} {
    gap: 5px;
  }
`;

const LayerPicker = styled.span`
  position: relative;
  display: flex;
  align-items: center;
  gap: 3px;
  width: 112px;
  height: 21px;
  padding: 0 4px;
  border: 1px solid #b3bac3;
  background-color: #fff;

  select {
    flex: 1;
    min-width: 0;
    padding: 0;
    appearance: none;
    border: 0;
    background: none;
    font-size: 11px;
  }

  ${Caret} {
    position: absolute;
    right: 5px;
    top: 7px;
    width: 6px;
    pointer-events: none;
  }
`;

const Hints = styled.p`
  margin: 0;
  padding: 0 20px;
  font-size: 9px;
  line-height: 12px;
`;

const ScaleLabel = styled.span`
  margin-top: auto;
  padding-left: 4px;
  font-size: 16px;
  line-height: 20px;
`;

const Csys = styled.svg`
  position: absolute;
  left: 422px;
  top: 135px;
`;

const Triad = styled.svg`
  position: absolute;
  left: 0;
  bottom: 0;
`;

const StatusBar = styled.footer`
  height: 29px;
  flex: none;
  display: flex;
  align-items: center;
  padding-left: 7px;

  output {
    flex: 1;
  }
`;

const StatusTools = styled.div`
  display: flex;
  align-items: center;
  gap: 12px;
  height: 100%;
  padding: 0 3px 0 10px;
  border-left: 1px solid #8d9094;

  input {
    width: 343px;
    height: 21px;
    border: 1px solid #b3bac3;
    background-color: #fff;
  }
`;

const tabs = [
  "造型", "曲面", "線框", "直接編輯", "鈑金", "焊件", "點雲", "資料交換", "修復", "PMI",
  "工具", "視覺樣式", "查詢", "電極", "模具", "仿真", "App",
];

const basicShapes = [
  ["sketch", "草圖", true],
  ["block", "六面體", true],
  ["extrude", "拉伸", false],
  ["revolve", "旋轉", false],
  ["sweep", "掃掠", true],
  ["loft", "放樣", true],
];

const features = [
  ["fillet", "圓角", true],
  ["chamfer", "倒角", false],
  ["draft", "拔模", true],
  ["hole", "孔", true],
  ["slot", "槽", false],
  ["rib", "肋材", true],
  ["thread", "螺紋", true],
  ["lip", "唇緣", true],
  ["stock", "坯料", true],
];

const smallGroups = [
  {
    title: "編輯模型",
    w: 236,
    cols: "77px 65px 84px",
    launch: true,
    items: [
      ["offset", "面偏移", true], ["shell", "抽殼"], ["thicken", "加厚"],
      ["add", "添加", true], ["divide", "分割", true], ["simplify", "簡化", true],
      ["replace", "置換面"], ["selfCross", "移除自相交"], ["inlay", "鑲嵌", true],
    ],
  },
  {
    title: "變形",
    w: 206,
    cols: "100px 98px",
    items: [
      ["bend", "圓柱折彎", true], ["pointDeform", "指定點變形", true], ["wrapFace", "纏繞到面"],
      ["wrapArray", "纏繞陣列到面"],
    ],
  },
  {
    title: "基礎編輯",
    w: 160,
    cols: "99px 50px",
    items: [
      ["pattern", "陣列幾何體", true], ["mirror", "鏡像幾何體", true], ["move", "移動", true],
      ["copy", "複製"], ["scale", "縮放"],
    ],
  },
  { title: "基準", w: 108, cols: "100px", items: [["datum", "拖拽基準面", true]] },
];

const selectTools = ["listTeal", "listTeal", "listRed", "listGrey", "cursor", "layers", "copyBox", "ball", "gearBox"];
const snapTools = [
  "cursorGrey", "gearGrey", "circlePlay", "dots", "lineEnd", "lineMid", "circleDot",
  "circleQuad", "spline", "wave", "tangent", "line", "surface", "surface",
];
const viewTools = [
  ["exit"], ["camera", true], ["eraser"], ["boxYellow"], ["boxTeal", true], ["boxWire", true],
  ["mesh", true], ["zoomBox", true], ["target", true], ["fit"], ["measure", true],
  ["monitor", true], ["black"], ["paleBlue"], ["sheets", true],
];

const BigGroup = ({ title, items, w, pad }) => (
  <Group $w={w}>
    <BigRow $pad={pad}>
      {items.map(([name, label, caret]) => (
        <BigButton key={name} type="button" $wide={label.length > 2}>
          <svg width="32" height="32" viewBox="0 0 32 32" aria-hidden="true">
            {big[name]}
          </svg>
          {label}
          {caret && <Caret />}
        </BigButton>
      ))}
    </BigRow>
    <h2>{title}</h2>
  </Group>
);

const SmallGroup = ({ title, items, w, cols, launch }) => (
  <Group $w={w}>
    <SmallGrid $cols={cols}>
      {items.map(([name, label, caret]) => (
        <SmallButton key={name} type="button">
          <Icon name={name} />
          {label}
          {caret && <Caret />}
        </SmallButton>
      ))}
    </SmallGrid>
    <h2>{title}</h2>
    {launch && (
      <LaunchCorner type="button" aria-label="展開">
        <Icon name="launch" size={7} />
      </LaunchCorner>
    )}
  </Group>
);

const Header = () => (
  <>
    <TitleBar>
      <Icon name="logo" />
      <Separator $h={13} />
      <Cluster $w={180}>
        {["newFile", "open", "save", "print", "printPlus", "undo", "redo", "refresh"].map((name) => (
          <Tool key={name} name={name} />
        ))}
      </Cluster>
      <svg width="8" height="8" viewBox="0 0 8 8">
        <path d="M1 0h6v1H1zM0 3h8L4 7z" fill="#111" />
      </svg>
      <Tool name="play" />
      <h1>{"中望3D 2026 SP2 x64  - [* 零件001.Z3PRT]"}</h1>
      <WindowButtons $gap={5}>
        <Tool name="minimise" label="最小化" />
        <Tool name="restore" label="還原" />
        <Tool name="close" label="關閉" />
      </WindowButtons>
    </TitleBar>
    <TabRow>
      <FileButton type="button">文件(F)</FileButton>
      {tabs.map((tab, i) => (
        <TabButton key={tab} type="button" $active={i === 0}>
          {tab}
        </TabButton>
      ))}
      <TabTools>
        <Tool name="chevUp" label="收起" />
        <SearchBox>
          <BareInput placeholder="查找命令" aria-label="查找命令" />
          <Icon name="lens" />
        </SearchBox>
        <Tool name="gear" label="設置" />
        <IconButton type="button" aria-label="說明">
          <HelpBadge>?</HelpBadge>
          <Caret />
        </IconButton>
        <WindowButtons>
          <Tool name="docMin" label="最小化文件" />
          <Tool name="docRestore" label="還原文件" />
          <Tool name="docClose" label="關閉文件" />
        </WindowButtons>
      </TabTools>
    </TabRow>
    <Ribbon>
      <BigGroup title="基礎造型" items={basicShapes} w={238} pad={10} />
      <BigGroup title="工程特徵" items={features} w={326} pad={4} />
      {smallGroups.map((group) => (
        <SmallGroup key={group.title} {...group} />
      ))}
    </Ribbon>
  </>
);

const SelectionBar = () => (
  <ToolRow>
    <Grip />
    <Tool name="pick" label="選擇" as={ToggleButton} />
    <Cluster $w={101}>
      <Tool name="plus" />
      <Tool name="minus" />
      <Tool name="marquee" caret />
      <Tool name="lasso" />
    </Cluster>
    <Separator />
    <Cluster $w={16}>
      <Tool name="colorFilter" />
    </Cluster>
    <Dropdown w={130} label="篩選" value="全部" />
    <Tool name="partPick" label="零件" as={ToggleButton} />
    <Dropdown w={127} label="範圍" value="僅有零件" disabled />
    <Cluster $w={40}>
      <Tool name="link" />
      <Tool name="globeList" />
    </Cluster>
    <Separator />
    <Cluster $w={204}>
      {selectTools.map((name, i) => (
        <Tool key={i} name={name} />
      ))}
    </Cluster>
    <Separator $gap={2} />
    <Cluster $w={64}>
      <Tool name="circleCursor" />
      <Tool name="loop" />
      <Tool name="square" />
    </Cluster>
    <Dropdown w={129} label="選擇方式" value="單一選擇" />
    <Cluster $w={322}>
      {snapTools.map((name, i) => (
        <Tool key={i} name={name} />
      ))}
    </Cluster>
  </ToolRow>
);

const ManagerPanel = () => (
  <Manager>
    <header>
      <h2>管理器</h2>
      <Tool name="restore" label="浮動" />
      <Tool name="close" label="關閉" />
    </header>
    <ManagerBody>
      <SideTabs>
        {Object.keys(side).map((name, i) => (
          <SideTab key={name} type="button" aria-label={name} $active={i === 0}>
            <svg width="24" height="24" viewBox="0 0 24 24">
              {side[name]}
            </svg>
          </SideTab>
        ))}
      </SideTabs>
      <TreePanel>
        <FilterRow>
          <Dropdown w={146} h={24} label="顯示" value="顯示常用" />
          <label>
            <BareInput placeholder="按回車鍵查詢" aria-label="查詢" />
          </label>
          <Tool name="funnel" label="篩選" as={FilterButton} />
        </FilterRow>
        <TreeArea>
          <TreeTable>
            <thead>
              <tr>
                <th>特徵節點</th>
                <th aria-label="值" />
              </tr>
            </thead>
            <tbody>
              <tr>
                <td>
                  <Node $indent={1} $gap={3}>
                    <Chevron />
                    <Icon name="assembly" />
                    零件001
                  </Node>
                </td>
                <td />
              </tr>
              <tr>
                <td>
                  <Node $indent={15} $gap={3}>
                    <Chevron />
                    <Icon name="folder" size={14} />
                    歷史
                  </Node>
                </td>
                <td />
              </tr>
              <tr>
                <td>
                  <Node $indent={44} as="label">
                    <CheckBox type="checkbox" defaultChecked />
                    <Icon name="csys" />
                    默認CSYS
                  </Node>
                </td>
                <td />
              </tr>
              <tr>
                <td>
                  <Node $indent={44} $color="#f01414" $gap={4}>
                    <Icon name="back" />
                    ----- 建模停止 -----
                  </Node>
                </td>
                <td />
              </tr>
            </tbody>
          </TreeTable>
        </TreeArea>
        <Replay type="button">重播</Replay>
      </TreePanel>
    </ManagerBody>
  </Manager>
);

const ModelCsys = () => (
  <Csys width="160" height="180" viewBox="0 0 480 540">
    <g fill="#a08060" fillOpacity=".15" stroke="#a8701c" strokeWidth="3.500" strokeLinejoin="round">
      <path d="M131 235L221 205L205 345L114 376z" />
      <path d="M131 235L248 280L232 420L114 376z" />
      <path d="M205 345L322 388L232 420L114 376z" fillOpacity=".1" />
    </g>
    <g stroke="#a8701c" strokeWidth="4">
      <path d="M114 376L148 104M114 376L345 462M114 376L285 318" />
    </g>
    <path d="M128 198l8-34l9 34z" fill="#2222e8" />
    <path d="M140 128l8-30l5 30z" fill="#e0b040" stroke="#46300a" strokeWidth="2" />
    <path d="M260 444l6-18l24 15z" fill="#f01818" />
    <path d="M320 462l6-12l23 15z" fill="#e0b040" stroke="#46300a" strokeWidth="2" />
    <path d="M222 328l22-6l4 14l-20 8z" fill="#128a12" />
    <path d="M268 312l22 4l-16 11z" fill="#6b4210" stroke="#36200a" strokeWidth="2" />
    <g fill="#a8701c" fontSize="48" textAnchor="middle" fontFamily="Noto Sans, sans-serif">
      <text x="152" y="87">Z</text>
      <text x="314" y="325">Y</text>
      <text x="372" y="492">X</text>
    </g>
  </Csys>
);

const CornerTriad = () => (
  <Triad width="142" height="145" viewBox="24 0 426 435">
    <g fill="none" strokeWidth="4">
      <path d="M219 204L232 92" stroke="#2a2ae0" />
      <path d="M219 204L290 180" stroke="#36b236" />
      <path d="M219 204L318 240" stroke="#f01818" />
    </g>
    <path d="M224 102l9-20l7 20z" fill="#1a1a9c" />
    <path d="M280 174l22 4l-18 12z" fill="#0c7a14" />
    <path d="M304 244l6-12l18 13z" fill="#e01010" />
    <g fontSize="46" textAnchor="middle" fontFamily="Noto Sans, sans-serif">
      <text x="235" y="77" fill="#2a2af0">Z</text>
      <text x="312" y="191" fill="#28d028">Y</text>
      <text x="342" y="274" fill="#f01818">X</text>
    </g>
  </Triad>
);

const DocumentView = () => (
  <Document>
    <DocTabs>
      <DocTab>
        * 零件001.Z3PRT
        <button type="button" aria-label="關閉分頁">
          <svg width="11" height="11" viewBox="0 0 11 11">
            <path d="M1 1l8 9M9 1l-8 9" stroke="#7c6532" strokeWidth="2" />
          </svg>
        </button>
      </DocTab>
      <button type="button" aria-label="新增分頁">
        <svg width="10" height="10" viewBox="0 0 10 10">
          <path d="M0 5h10M5 0v10" stroke="#8d8686" strokeWidth="1.500" />
        </svg>
      </button>
      <Spacer />
      <Tool name="customise" label="分頁清單" />
    </DocTabs>
    <Viewport>
      <ViewTools>
        {viewTools.map(([name, caret]) => (
          <Tool key={name} name={name} size={18} caret={caret} />
        ))}
        <LayerPicker>
          <Icon name="bulb" size={14} />
          <Icon name="layerOn" size={14} />
          <select aria-label="圖層">
            <option>圖層0000</option>
          </select>
          <Caret />
        </LayerPicker>
      </ViewTools>
      <Hints>
        按下&lt;F2&gt;動態觀察
        <br />
        &lt;F8&gt;或者&lt;Shift-roll&gt; 查找下一個有效的篩檢程式設置.
      </Hints>
      <ModelCsys />
      <CornerTriad />
      <ScaleLabel>200mm</ScaleLabel>
    </Viewport>
  </Document>
);

const App = () => (
  <Desktop>
    <GlobalStyle />
    <Defs />
    <Window>
      <Header />
      <SelectionBar />
      <Main>
        <ManagerPanel />
        <DocumentView />
      </Main>
      <StatusBar>
        <output>選擇命令或實體</output>
        <StatusTools>
          <Tool name="panelTool" label="管理器" as={ToggleButton} />
          <Tool name="screen" label="輸出" />
          <Tool name="notes" label="訊息" />
          <input aria-label="提示" />
          <svg width="10" height="10" viewBox="0 0 10 10">
            <path d="M8 0h2v2H8zM4 4h2v2H4zM8 4h2v2H8zM0 8h2v2H0zM4 8h2v2H4zM8 8h2v2H8z" fill="#a9b0b8" />
          </svg>
        </StatusTools>
      </StatusBar>
    </Window>
  </Desktop>
);

export default App;
